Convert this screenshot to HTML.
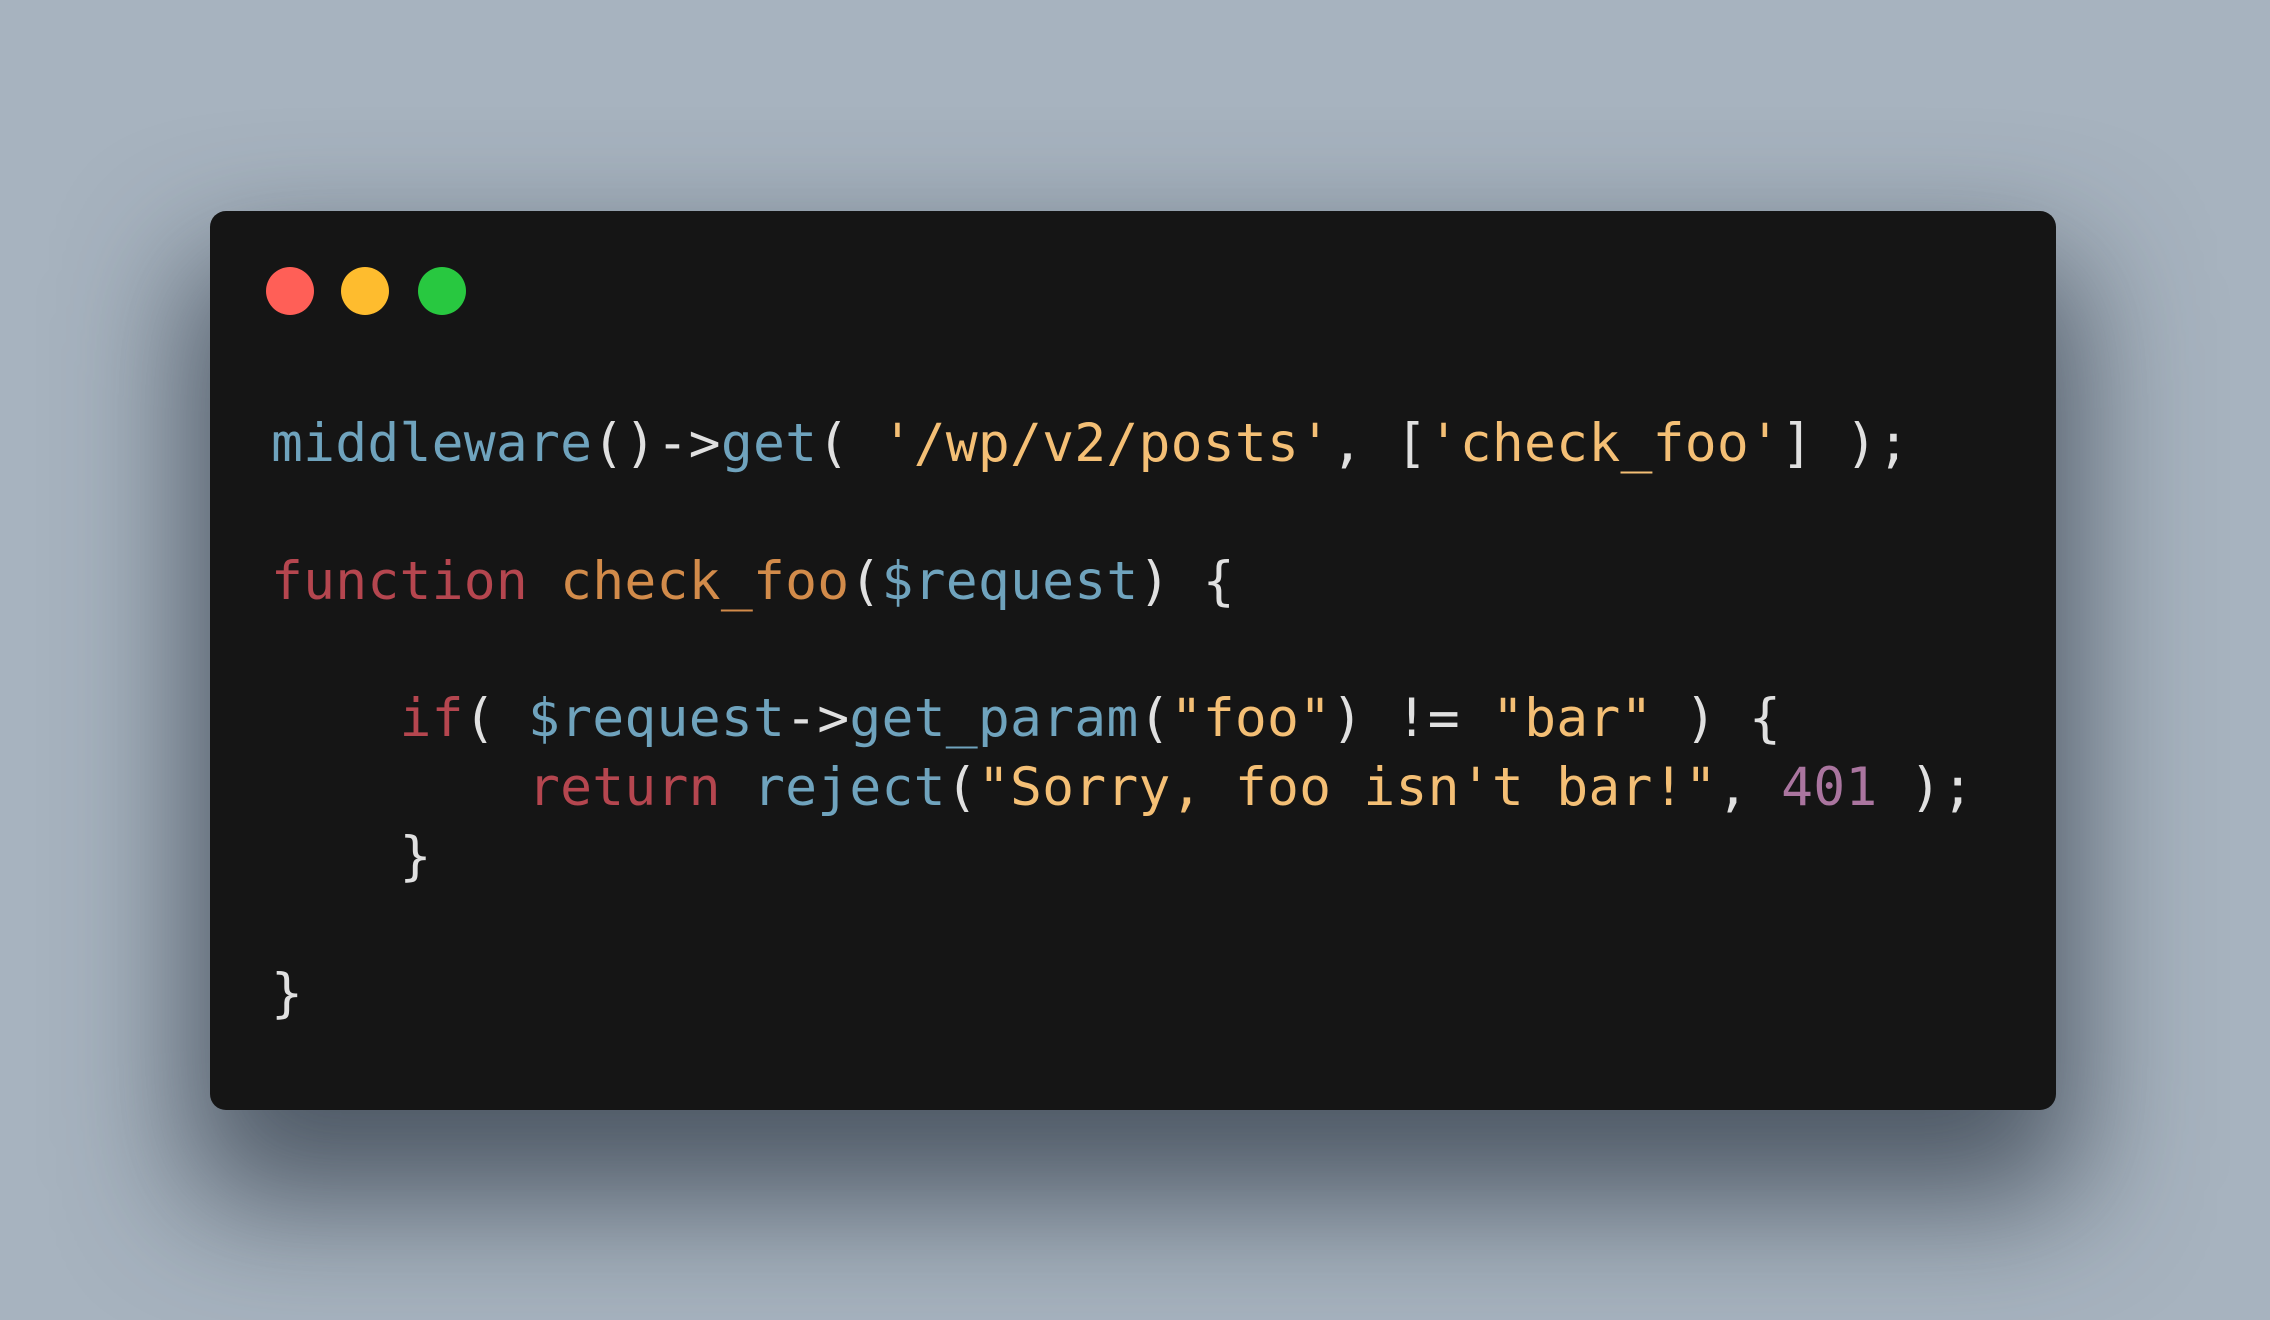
<!DOCTYPE html>
<html><head><meta charset="utf-8"><style>
html,body{margin:0;padding:0}
body{width:2270px;height:1320px;background:#a7b3bf;position:relative;overflow:hidden}
.card{position:absolute;left:210px;top:211px;width:1846px;height:899px;background:#151515;border-radius:16px;box-shadow:0 70px 140px 20px rgba(40,50,62,0.7)}
.dot{position:absolute;top:267px;width:48px;height:48px;border-radius:50%}
pre{position:absolute;left:271px;top:410px;margin:0;font-family:"DejaVu Sans Mono","Liberation Mono",monospace;font-size:53px;line-height:68.8px;color:#e0e0e0;letter-spacing:0.22px}
.b{color:#6fa3bd}.r{color:#b5464f}.o{color:#d28b4a}.y{color:#f4bf75}.p{color:#aa759f}
</style></head><body>
<div class="card"></div>
<div class="dot" style="left:266px;background:#ff5f57"></div>
<div class="dot" style="left:341px;background:#febc2e"></div>
<div class="dot" style="left:418px;background:#28c840"></div>
<pre><span class="b">middleware</span>()-&gt;<span class="b">get</span>( <span class="y">'/wp/v2/posts'</span>, [<span class="y">'check_foo'</span>] );

<span class="r">function</span> <span class="o">check_foo</span>(<span class="b">$request</span>) {

    <span class="r">if</span>( <span class="b">$request</span>-&gt;<span class="b">get_param</span>(<span class="y">"foo"</span>) != <span class="y">"bar"</span> ) {
        <span class="r">return</span> <span class="b">reject</span>(<span class="y">"Sorry, foo isn't bar!"</span>, <span class="p">401</span> );
    }

}</pre>
</body></html>
